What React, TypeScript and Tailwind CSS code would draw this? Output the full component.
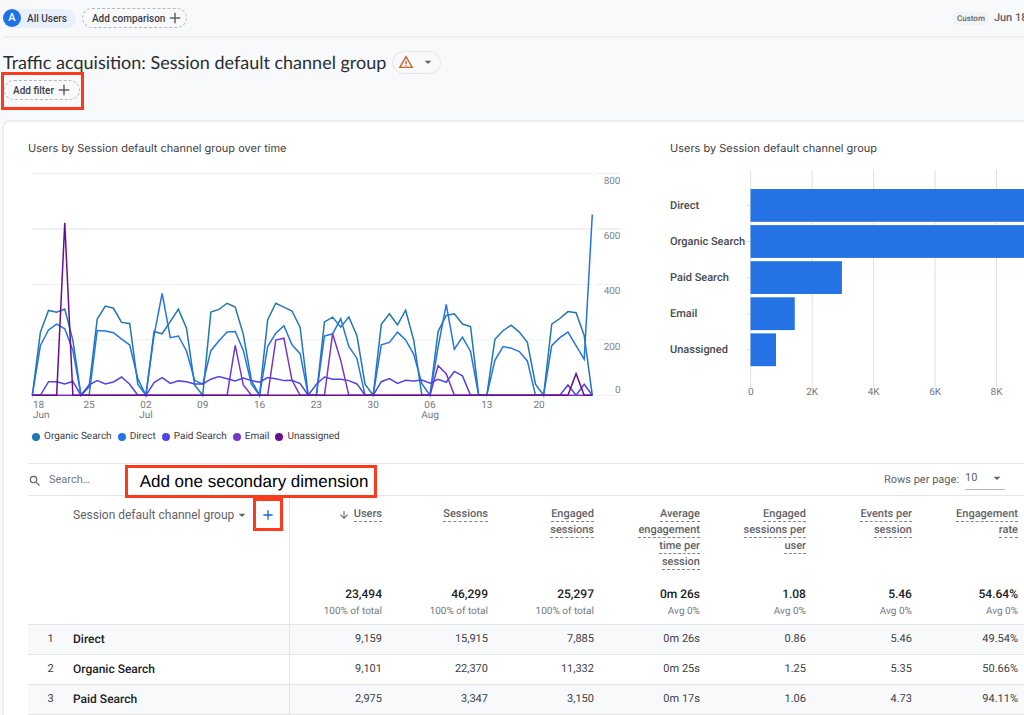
import { MdAdd, MdArrowDownward, MdArrowDropDown, MdSearch, MdWarningAmber } from "react-icons/md";

interface Series {
  name: string;
  color: string;
  values: number[];
}

interface Column {
  lines: string[];
  total: string;
  note: string;
  sorted?: boolean;
}

// 70 days, Jun 18 to Aug 26
const DAYS = 70;

// expands { day: value } into a full daily series, other days are 0
function sparse(points: Record<number, number>): number[] {
  return Array.from({ length: DAYS }, (_, i) => points[i] ?? 0);
}

const series: Series[] = [
  {
    name: "Organic Search",
    color: "#1f78b0",
    values: [
      0, 228, 306, 300, 311, 198, 0, 30, 275, 322, 314, 263, 259, 40, 0, 230, 222, 266, 311, 242,
      37, 0, 300, 310, 332, 318, 220, 54, 0, 272, 332, 318, 304, 245, 0, 0, 265, 282, 246, 283,
      215, 40, 0, 256, 294, 254, 307, 198, 0, 0, 230, 288, 294, 257, 248, 0, 0, 202, 233, 253,
      228, 191, 40, 0, 257, 277, 302, 298, 216, 0,
    ],
  },
  {
    name: "Direct",
    color: "#2374e8",
    values: [
      0, 180, 236, 257, 240, 162, 0, 0, 234, 232, 226, 203, 182, 60, 0, 216, 368, 208, 214, 160,
      54, 40, 161, 197, 228, 230, 162, 40, 0, 176, 224, 251, 182, 150, 0, 0, 214, 222, 276, 176,
      133, 0, 0, 182, 191, 228, 200, 148, 42, 0, 174, 328, 166, 210, 158, 0, 0, 126, 176, 170,
      158, 124, 0, 0, 179, 208, 228, 179, 130, 652,
    ],
  },
  {
    name: "Paid Search",
    color: "#4f46e5",
    values: [
      0, 0, 49, 49, 41, 50, 0, 38, 53, 41, 48, 66, 40, 0, 0, 46, 64, 43, 52, 49,
      41, 41, 58, 68, 60, 52, 62, 53, 47, 64, 60, 53, 54, 42, 0, 40, 66, 58, 58, 53,
      41, 0, 0, 49, 60, 43, 54, 52, 55, 44, 58, 47, 86, 70, 0, 0, 0, 0, 0, 0,
      0, 0, 0, 0, 0, 0, 37, 0, 40, 0,
    ],
  },
  {
    name: "Email",
    color: "#7436cb",
    values: sparse({ 25: 180, 26: 37, 30: 199, 31: 206, 32: 54, 37: 222, 38: 126, 50: 107, 51: 78 }),
  },
  {
    name: "Unassigned",
    color: "#6a0d93",
    values: sparse({ 4: 622, 67: 78 }),
  },
];

const bars = [
  { name: "Direct", value: 9159 },
  { name: "Organic Search", value: 9101 },
  { name: "Paid Search", value: 2975 },
  { name: "Email", value: 1440 },
  { name: "Unassigned", value: 830 },
];

const columns: Column[] = [
  { lines: ["Users"], total: "23,494", note: "100% of total", sorted: true },
  { lines: ["Sessions"], total: "46,299", note: "100% of total" },
  { lines: ["Engaged", "sessions"], total: "25,297", note: "100% of total" },
  { lines: ["Average", "engagement", "time per", "session"], total: "0m 26s", note: "Avg 0%" },
  { lines: ["Engaged", "sessions per", "user"], total: "1.08", note: "Avg 0%" },
  { lines: ["Events per", "session"], total: "5.46", note: "Avg 0%" },
  { lines: ["Engagement", "rate"], total: "54.64%", note: "Avg 0%" },
];

const rows = [
  { name: "Direct", cells: ["9,159", "15,915", "7,885", "0m 26s", "0.86", "5.46", "49.54%"] },
  { name: "Organic Search", cells: ["9,101", "22,370", "11,332", "0m 25s", "1.25", "5.35", "50.66%"] },
  { name: "Paid Search", cells: ["2,975", "3,347", "3,150", "0m 17s", "1.06", "4.73", "94.11%"] },
];

function LineChart() {
  const x = (i: number) => 4.3 + i * 8.116;
  const y = (v: number) => 226.3 - v * 0.2772;
  const ticks = [
    { day: 0, label: "18", month: "Jun" },
    { day: 7, label: "25" },
    { day: 14, label: "02", month: "Jul" },
    { day: 21, label: "09" },
    { day: 28, label: "16" },
    { day: 35, label: "23" },
    { day: 42, label: "30" },
    { day: 49, label: "06", month: "Aug" },
    { day: 56, label: "13" },
    { day: 63, label: "20" },
  ];

  return (
    <svg width="600" height="254" className="block" role="img" aria-label="Users over time">
      {[0, 200, 400, 600, 800].map((v) => (
        <g key={v}>
          <path d={`M4 ${y(v)}H564.5M568 ${y(v)}H592`} stroke={v === 600 ? "#e0e1e3" : "#eff0f1"} />
          <text x="592.5" y={v === 0 ? 224 : y(v) + 10} textAnchor="end" fontSize="10" fill="#80868b">
            {v}
          </text>
        </g>
      ))}
      {ticks.map((t) => {
        const first = t.day === 0;
        const tx = first ? 5 : t.day === 63 ? 511 : x(t.day);
        const anchor = first ? "start" : "middle";
        return (
          <g key={t.day} fontSize="10" fill="#757a80" textAnchor={anchor}>
            <path d={`M${x(t.day)} 226v4`} stroke="#dadce0" />
            <text x={tx} y="239">{t.label}</text>
            {t.month && <text x={tx} y="249">{t.month}</text>}
          </g>
        );
      })}
      {series.map((s) => (
        <polyline
          key={s.name}
          points={s.values.map((v, i) => `${x(i)},${y(v)}`).join(" ")}
          fill="none"
          stroke={s.color}
          strokeWidth="1.5"
        />
      ))}
    </svg>
  );
}

function BarChart() {
  const x = (v: number) => 80.7 + v * 0.03073;
  return (
    <svg width="420" height="232" className="block" role="img" aria-label="Users by channel">
      {[0, 2, 4, 6, 8].map((k) => (
        <g key={k}>
          <path d={`M${x(k * 1000)} 1V218`} stroke="#e0e0e0" />
          <text x={x(k * 1000)} y="226" textAnchor="middle" fontSize="10" fill="#757a80">
            {k === 0 ? "0" : `${k}K`}
          </text>
        </g>
      ))}
      {bars.map((b, i) => {
        const top = 20 + i * 36.1;
        return (
          <g key={b.name}>
            <path d={`M76 ${top + 16.5}h5`} stroke="#e0e0e0" />
            <rect x="80.5" y={top} width={b.value * 0.03073} height="32.8" fill="#2472e4" />
            <text x="0" y={top + 20} fontSize="11" fontWeight="500" fill="#45494d">
              {b.name}
            </text>
          </g>
        );
      })}
    </svg>
  );
}

export default function App() {
  return (
    <div className="min-h-screen overflow-hidden bg-[#f8f9fb] font-['Roboto',sans-serif] text-[#3c4043] [text-rendering:geometricPrecision]">
      <header className="ml-[3px] flex h-[38px] items-center gap-[6px] border-b-2 border-[#eff0f2]">
        <button className="flex h-[19px] items-center gap-[6px] rounded-full bg-[#e8f0fe] pr-[9px] text-[10px] font-medium">
          <span className="flex size-[18px] items-center justify-center rounded-full bg-[#1f71e6] text-[11px] text-white">
            A
          </span>
          All Users
        </button>
        <button className="flex h-[20px] items-center gap-px rounded-full border border-dashed border-[#b4b7bb] pr-[2px] pl-[9px] text-[10px] font-medium">
          Add comparison
          <MdAdd className="size-[18px] text-[#5f6368]" />
        </button>
        <div className="ml-auto flex w-[70px] shrink-0 items-center gap-[6px] overflow-hidden whitespace-nowrap text-[#5f6368]">
          <span className="rounded-sm bg-[#f1f3f4] px-[3px] text-[8px] leading-[13px] font-medium">Custom</span>
          <span className="text-[11px] font-medium">Jun 18</span>
        </div>
      </header>

      <div className="flex h-[34px] items-center gap-[6px] pt-[14px] pl-[3px]">
        <h1 className="font-['Lato',sans-serif] text-[18px] leading-[22px] whitespace-nowrap text-[#2b2e31]">
          Traffic acquisition: Session default channel group
        </h1>
        <button
          aria-label="Data quality"
          className="flex h-[23px] items-center gap-[6px] rounded-full border border-[#e3e5e8] pr-1 pl-[5px]"
        >
          <MdWarningAmber className="size-4 text-[#c8622b]" />
          <MdArrowDropDown className="size-4 text-[#5f6368]" />
        </button>
      </div>

      <div className="ml-px flex h-[38px] w-[83px] items-center border-[3px] border-[#fb3a1e] pb-[2px]">
        <button className="flex h-[20px] items-center gap-px rounded-full border border-dashed border-[#b4b7bb] pr-[6px] pl-2 text-[10px] font-medium whitespace-nowrap">
          Add filter
          <MdAdd className="size-[18px] text-[#5f6368]" />
        </button>
      </div>

      <main className="mt-[10px] ml-[2px] rounded-tl-lg border-t-2 border-l-2 border-[#eceef0] bg-white pl-6">
        <div className="grid grid-cols-[642px_1fr]">
          <section>
            <h2 className="mt-[19px] mb-[13px] font-['Inter',sans-serif] text-[11px] leading-[15px]">
              Users by Session default channel group over time
            </h2>
            <LineChart />
            <ul className="mt-[7px] ml-1 flex gap-[6px] text-[10px] leading-[14px]">
              {series.map((s) => (
                <li key={s.name} className="flex items-center gap-1">
                  <span className="size-2 rounded-full" style={{ backgroundColor: s.color }} />
                  {s.name}
                </li>
              ))}
            </ul>
          </section>
          <section className="min-w-0 overflow-hidden">
            <h2 className="mt-[19px] mb-[13px] font-['Inter',sans-serif] text-[11px] leading-[15px]">
              Users by Session default channel group
            </h2>
            <BarChart />
          </section>
        </div>

        <div className="relative mt-[19px] flex h-[33px] items-center border-y border-[#e4e5e7] pt-[2px] text-[11px] text-[#5f6368]">
          <label htmlFor="search" aria-label="Search" className="w-[21px]">
            <MdSearch className="size-[14px]" />
          </label>
          <input
            id="search"
            placeholder="Search…"
            className="w-[76px] outline-none placeholder:text-[#757a80]"
          />
          <div className="absolute top-[1px] left-[97px] flex h-[33px] w-[252px] items-center justify-center border-[3px] border-[#fb3a1e] bg-white pl-[6px] font-['Liberation_Sans',sans-serif] text-[17px] whitespace-nowrap text-black">
            Add one secondary dimension
          </div>
          <label htmlFor="rows" className="ml-auto">Rows per page:</label>
          <div className="relative mr-[19px] mb-[2px] ml-[6px] h-5 w-10 border-b border-[#b4b7bb]">
            <select id="rows" className="w-full appearance-none outline-none">
              <option>10</option>
            </select>
            <MdArrowDropDown className="pointer-events-none absolute top-0 right-0 size-4" />
          </div>
        </div>

        <div className="overflow-hidden">
          <table className="w-full min-w-[1003px] table-fixed text-[11px]">
            <colgroup>
              <col className="w-[45px]" />
              <col className="w-[216px]" />
              {columns.map((_, i) => (
                <col key={i} />
              ))}
            </colgroup>
            <thead>
              <tr className="h-[128px] align-top text-[#5f6368]">
                <th colSpan={2} className="border-r border-[#e4e5e7] p-0 font-normal">
                  <div className="flex items-center pt-[2px] pl-[45px]">
                    <button className="flex items-center text-[12px] whitespace-nowrap">
                      Session default channel group
                      <MdArrowDropDown className="size-4" />
                    </button>
                    <button
                      aria-label="Add secondary dimension"
                      className="mr-[6px] ml-auto flex h-[33px] w-[30px] shrink-0 items-center justify-center border-[3px] border-[#fb3a1e]"
                    >
                      <MdAdd className="size-4 text-[#1967d2]" />
                    </button>
                  </div>
                </th>
                {columns.map((c, i) => (
                  <th key={i} className="p-0 pt-[10px] pr-[13px] text-right font-medium">
                    <div className="flex h-[80px] justify-end gap-1">
                      {c.sorted && <MdArrowDownward className="mt-[3px] size-3" />}
                      <div className="flex flex-col items-end">
                        {c.lines.map((line) => (
                          <span key={line} className="h-4 border-b border-dashed border-[#80868b] leading-4 whitespace-nowrap">
                            {line}
                          </span>
                        ))}
                      </div>
                    </div>
                    <div className="text-[12px] leading-4 font-medium text-[#202124]">{c.total}</div>
                    <div className="mt-[3px] text-[10px] leading-[14px] font-normal text-[#757a80]">{c.note}</div>
                  </th>
                ))}
              </tr>
            </thead>
            <tbody>
              {rows.map((r, i) => (
                <tr key={r.name} className="h-[30px] border-y border-[#e4e5e7] odd:bg-[#f8f9fb]">
                  <td className="p-0 text-center">{i + 1}</td>
                  <th scope="row" className="border-r border-[#e4e5e7] p-0 text-left text-[12px] font-medium text-[#202124]">
                    {r.name}
                  </th>
                  {r.cells.map((cell, j) => (
                    <td key={j} className="p-0 pr-[13px] text-right">{cell}</td>
                  ))}
                </tr>
              ))}
            </tbody>
          </table>
        </div>
      </main>
    </div>
  );
}
